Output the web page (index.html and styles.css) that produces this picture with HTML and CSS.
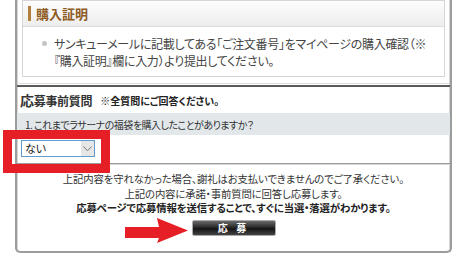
FILE: index.html
```html
<!DOCTYPE html>
<html lang="ja">
<head>
<meta charset="utf-8">
<link rel="stylesheet" href="styles.css">
</head>
<body>
<div class="page">
  <div class="panel">
    <div class="top">
      <div class="box">
        <div class="box-head"><span class="box-bar"></span><span class="box-title">購入証明</span></div>
        <ul class="box-body">
          <li>サンキューメールに記載してある「ご注文番号」をマイページの購入確認（※『購入証明』欄に入力）より提出してください。</li>
        </ul>
      </div>
    </div>
    <div class="rule"></div>
    <div class="q-head"><span class="q-title"><span class="q-first">応</span>募事前質問</span><span class="q-note">※全質問にご回答ください。</span></div>
    <div class="q-row">1. これまでラサーナの福袋を購入したことがありますか？</div>
    <div class="q-answer">
      <div class="select">
        <select class="select-input"><option>ない</option><option>ある</option></select>
        <span class="select-arrow"><svg width="9" height="6" viewBox="0 0 9 6"><path d="M0.5 0.5 L4.5 4.8 L8.5 0.5" fill="none" stroke="#777" stroke-width="1"/></svg></span>
      </div>
    </div>
    <div class="foot">
      <p class="foot-line">上記内容を守れなかった場合、謝礼はお支払いできませんのでご了承ください。</p>
      <p class="foot-line">上記の内容に承諾・事前質問に回答し応募します。</p>
      <p class="foot-line foot-bold">応募ページで応募情報を送信することで、すぐに当選・落選がわかります。</p>
      <button class="apply" type="button">応 募</button>
    </div>
  </div>
  <div class="highlight"></div>
  <svg class="arrow" width="63" height="25" viewBox="0 0 63 25"><polygon points="0,9 34,9 32,0 63,12.5 32,25 34,20 0,20" fill="#e61e25"/></svg>
</div>
</body>
</html>
```
FILE: styles.css
```css
html, body {
  margin: 0;
  padding: 0;
  background: #fff;
}
body {
  font-family: "Noto Sans CJK JP", "Noto Sans", sans-serif;
  font-feature-settings: "palt";
  color: #333;
}
.page {
  position: relative;
  width: 467px;
  height: 261px;
  overflow: hidden;
}
.panel {
  margin-left: 15px;
  width: 437px;
  height: 253px;
  box-sizing: border-box;
  border: 2px solid #9c9c9c;
  border-top: none;
  border-radius: 0 0 5px 5px;
  box-shadow: inset 1px 0 0 #d6d6d6, inset -1px 0 0 #d6d6d6;
}
.top {
  padding: 0 5px;
  height: 84px;
  box-sizing: border-box;
  border-bottom: 1px solid #dedede;
}
.box {
  border: 1px solid #d6d6d6;
  height: 77px;
  box-sizing: border-box;
}
.box-head {
  height: 26px;
  box-sizing: border-box;
  display: flex;
  align-items: center;
  padding-left: 5px;
  background: linear-gradient(#fdfdfd, #ededed);
  border-bottom: 1px solid #dcdcdc;
}
.box-bar {
  width: 3px;
  height: 15px;
  background: #b27f3e;
  margin-right: 5px;
}
.box-title {
  font-size: 13px;
  font-weight: bold;
  color: #8e5c1f;
  line-height: 1;
}
.box-body {
  list-style: none;
  margin: 0;
  padding: 8px 2px 0 19px;
}
.box-body li {
  position: relative;
  padding-left: 12px;
  font-size: 12px;
  letter-spacing: -0.3px;
  line-height: 17px;
  color: #444;
}
.box-body li::before {
  content: "";
  position: absolute;
  left: 0;
  top: 6px;
  width: 5px;
  height: 5px;
  border-radius: 50%;
  background: #c4c4c4;
}
.rule {
  height: 2px;
  background: #5a5a5a;
  margin-top: 1px;
}
.q-head {
  height: 26px;
  display: flex;
  align-items: center;
  padding-left: 3px;
  gap: 8px;
}
.q-title {
  font-size: 12px;
  font-weight: bold;
  color: #333;
  letter-spacing: -0.3px;
}
.q-first {
  font-size: 14px;
}
.q-note {
  font-size: 10px;
  font-weight: bold;
  color: #222;
}
.q-row {
  height: 22px;
  display: flex;
  align-items: center;
  padding-left: 8px;
  background: #e2e7ea;
  font-size: 10px;
  letter-spacing: -0.5px;
  color: #333;
}
.q-answer {
  height: 29px;
  box-sizing: border-box;
  padding: 5px 0 0 4px;
  border-bottom: 1px solid #9a9a9a;
  box-shadow: 0 1px 0 #d8d8d8;
}
.select {
  display: flex;
  width: 74px;
  height: 17px;
  box-sizing: border-box;
  border: 1px solid #5f9bcc;
  background: #fff;
}
.select-input {
  appearance: none;
  -webkit-appearance: none;
  border: none;
  outline: none;
  background: transparent;
  flex: 1;
  min-width: 0;
  padding: 0 0 0 3px;
  margin: 0;
  font-family: inherit;
  font-feature-settings: "palt";
  font-size: 11px;
  color: #222;
  line-height: 15px;
  height: 15px;
}
.select-arrow {
  width: 13px;
  display: flex;
  align-items: center;
  justify-content: center;
  background: #e6e6e6;
}
.foot {
  text-align: center;
  padding-top: 8px;
}
.foot-line {
  margin: 0;
  font-size: 10.4px;
  letter-spacing: -0.15px;
  line-height: 14.5px;
  color: #333;
}
.foot-bold {
  font-weight: bold;
  color: #222;
}
.apply {
  display: block;
  margin: 4px auto 0;
  width: 84px;
  height: 16px;
  padding: 0;
  border: 1px solid #aaa;
  border-radius: 2px;
  background: linear-gradient(#6a6a6a, #2a2a2a 45%, #151515 55%, #444);
  color: #fff;
  font-family: inherit;
  font-size: 10px;
  font-weight: bold;
  letter-spacing: 3px;
  line-height: 14px;
}
.highlight {
  position: absolute;
  left: 3px;
  top: 130px;
  width: 107px;
  height: 43px;
  box-sizing: border-box;
  border: 9px solid #e61e25;
}
.arrow {
  position: absolute;
  left: 125px;
  top: 218px;
}
```
